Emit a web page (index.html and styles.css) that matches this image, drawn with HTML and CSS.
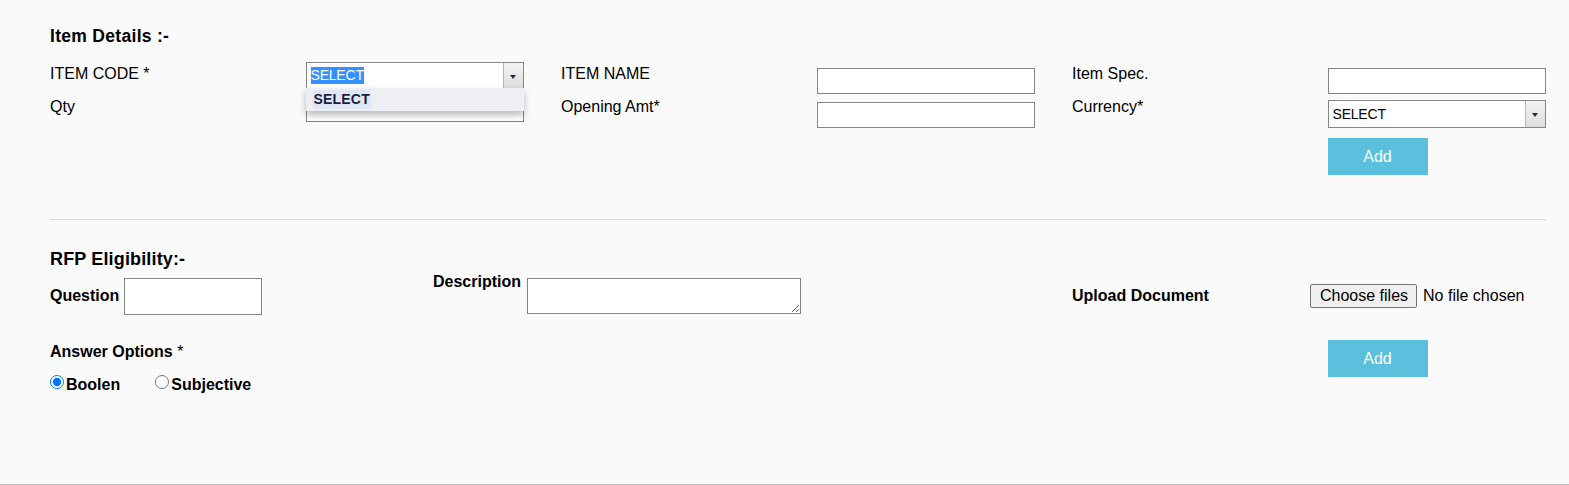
FILE: index.html
```html
<!DOCTYPE html>
<html lang="en">
<head>
<meta charset="utf-8">
<title>Item Details</title>
<link rel="stylesheet" href="styles.css">
</head>
<body>
<div class="page">
  <h3 class="heading heading-1">Item Details :-</h3>
  <div class="grid6 item-grid">
    <div class="col">
      <label class="lbl lbl-1">ITEM CODE *</label>
      <label class="lbl lbl-2">Qty</label>
    </div>
    <div class="col">
      <div class="combo combo-code">
        <span class="combo-text"><span class="sel-hl">SELECT</span></span>
        <span class="combo-arrow"></span>
        <ul class="combo-list"><li><span class="opt-hl">SELECT</span></li></ul>
      </div>
      <input class="txt txt-qty" type="text">
    </div>
    <div class="col">
      <label class="lbl lbl-1">ITEM NAME</label>
      <label class="lbl lbl-2">Opening Amt*</label>
    </div>
    <div class="col">
      <input class="txt txt-r1" type="text">
      <input class="txt txt-r2" type="text">
    </div>
    <div class="col">
      <label class="lbl lbl-1">Item Spec.</label>
      <label class="lbl lbl-2">Currency*</label>
    </div>
    <div class="col">
      <input class="txt txt-r1" type="text">
      <div class="combo combo-cur">
        <span class="combo-text">SELECT</span>
        <span class="combo-arrow"></span>
      </div>
      <button class="btn-add btn-add-1" type="button">Add</button>
    </div>
  </div>

  <div class="divider"></div>

  <h3 class="heading heading-2">RFP Eligibility:-</h3>
  <div class="rfp-grid">
    <div class="col row-q">
      <label class="blbl q-lbl">Question</label>
      <input class="txt txt-q" type="text">
    </div>
    <div class="col row-q">
      <label class="blbl d-lbl">Description</label>
      <textarea class="txt-area"></textarea>
    </div>
    <div class="col">
      <label class="blbl u-lbl">Upload Document</label>
    </div>
    <div class="col file-col">
      <div class="file">
        <button class="file-btn" type="button">Choose files</button>
        <span class="file-text">No file chosen</span>
      </div>
    </div>
  </div>

  <div class="grid6 answer-grid">
    <div class="col answer-col">
      <div class="blbl ans-lbl">Answer Options <span class="star">*</span></div>
      <div class="radios">
        <input class="radio" type="radio" name="ans" id="r1" checked>
        <label class="blbl r-lbl r-first" for="r1">Boolen</label>
        <input class="radio" type="radio" name="ans" id="r2">
        <label class="blbl r-lbl" for="r2">Subjective</label>
      </div>
    </div>
    <div class="col add-col">
      <button class="btn-add" type="button">Add</button>
    </div>
  </div>
</div>
</body>
</html>
```

FILE: styles.css
```css
* { box-sizing: border-box; }
html, body { margin: 0; padding: 0; background: #fafafa; }
body {
  font-family: "Liberation Sans", Arial, sans-serif;
  font-size: 16px;
  line-height: 20px;
  color: #000;
}
.page {
  min-height: 485px;
  padding: 26px 1px 0 35px;
  border-bottom: 1px solid #c5c6cc;
}
.heading {
  margin: 0 15px;
  font-weight: bold;
  line-height: 20px;
}
.heading-1 { font-size: 17.5px; letter-spacing: 0.3px; }
.heading-2 { font-size: 18px; letter-spacing: 0.15px; }
.grid6 {
  display: grid;
  grid-template-columns: repeat(6, 1fr);
}
.col {
  padding: 0 15px;
  display: flex;
  flex-direction: column;
  align-items: flex-start;
}
.item-grid { margin-top: 16px; }
.lbl { display: block; line-height: 20px; }
.lbl-1 { margin-top: 2px; }
.lbl-2 { margin-top: 13px; }

.txt {
  width: 218px;
  height: 26px;
  border: 1px solid #858585;
  background: #fff;
  padding: 1px 3px;
  font: 14px "Liberation Sans", Arial, sans-serif;
  margin: 0;
}
.txt-qty { margin-top: 7px; }
.txt-r1 { margin-top: 6px; }
.txt-r2 { margin-top: 8px; }

.combo {
  position: relative;
  width: 218px;
  height: 27px;
  border: 1px solid #868686;
  background: #fff;
  display: flex;
  align-items: center;
  font-size: 14px;
}
.combo-cur { margin-top: 6px; height: 28px; }
.combo-text {
  flex: 1;
  padding-left: 4px;
  line-height: 17px;
  letter-spacing: -0.2px;
}
.sel-hl {
  display: inline-block;
  background: #3390ff;
  color: #fff;
  line-height: 17px;
}
.combo-arrow {
  position: relative;
  align-self: stretch;
  width: 20px;
  background: linear-gradient(#f3f3f3, #dedede);
  border-left: 1px solid #b8b8b8;
}
.combo-arrow::after {
  content: "";
  position: absolute;
  left: 6px;
  top: 50%;
  margin-top: -1px;
  border-left: 3.5px solid transparent;
  border-right: 3.5px solid transparent;
  border-top: 4px solid #2a2a3a;
}
.combo-list {
  position: absolute;
  top: 100%;
  left: -1px;
  width: 218px;
  height: 23px;
  margin: 0;
  padding: 1px 0 0 7px;
  list-style: none;
  background: #eeeff2;
  box-shadow: 0 4px 7px rgba(0, 0, 0, 0.28);
  z-index: 5;
}
.opt-hl {
  display: inline-block;
  background: #dfe7f7;
  color: #1e1e3c;
  font-weight: bold;
  font-size: 14px;
  line-height: 19px;
  padding: 0 1px;
  letter-spacing: 0.2px;
}

.btn-add {
  width: 100px;
  height: 37px;
  border: 0;
  margin: 0;
  padding: 0;
  background: #5bc0de;
  color: #fff;
  font: 16px "Liberation Sans", Arial, sans-serif;
}
.btn-add-1 { margin-top: 10px; }

.divider {
  margin: 44px 22px 0 15px;
  border-top: 1px solid #d9d9d9;
}
.heading-2 { margin-top: 29px; }

.rfp-grid {
  display: grid;
  grid-template-columns: 383px 639px 238px 1fr;
  margin-top: 3px;
}
.row-q {
  flex-direction: row;
  align-items: flex-start;
}
.blbl { font-weight: bold; line-height: 20px; }
.q-lbl { margin-top: 14px; }
.txt-q {
  width: 138px;
  height: 37px;
  margin: 6px 0 0 5px;
}
.d-lbl { margin-top: 0; }
.txt-area {
  width: 274px;
  height: 36px;
  margin: 6px 0 0 6px;
  border: 1px solid #858585;
  background: #fff;
  font: 14px "Liberation Sans", Arial, sans-serif;
  padding: 2px;
}
.u-lbl { margin-top: 14px; }
.file {
  margin-top: 12px;
  display: flex;
  align-items: center;
  white-space: nowrap;
}
.file-btn {
  height: 24px;
  margin: 0;
  padding: 0 8px 0 9px;
  border: 1px solid #767676;
  border-radius: 2px;
  background: #efefef;
  color: #000;
  font: 16px "Liberation Sans", Arial, sans-serif;
}
.file-text { margin-left: 6px; }

.answer-grid { margin-top: 25px; }
.answer-col { grid-column: 1 / span 5; }
.add-col { grid-column: 6; }
.ans-lbl { margin-top: 2px; }
.star { font-weight: normal; }
.radios {
  margin-top: 13px;
  display: flex;
  align-items: flex-start;
}
.radio {
  width: 14px;
  height: 14px;
  margin: 0 2px 0 0;
}
.r-first { margin-right: 35px; }
```
